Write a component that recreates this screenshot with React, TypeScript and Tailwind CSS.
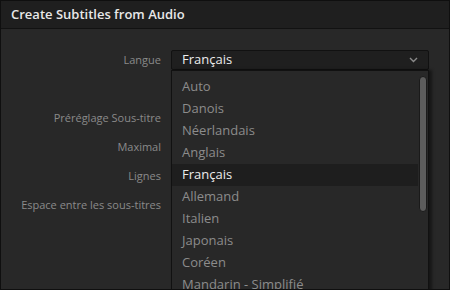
const languages = [
  "Auto",
  "Danois",
  "Néerlandais",
  "Anglais",
  "Français",
  "Allemand",
  "Italien",
  "Japonais",
  "Coréen",
  "Mandarin - Simplifié",
];

const labels = ["Préréglage Sous-titre", "Maximal", "Lignes", "Espace entre les sous-titres"];

export default function App() {
  const selected = "Français";

  return (
    <div className="w-[450px] h-[290px] overflow-hidden border border-[#0f0f0f] bg-[#282828] flex flex-col font-['Open_Sans',sans-serif]">
      <div className="h-[28px] shrink-0 bg-[#1f1f1f] border-b border-[#121212] flex items-center px-[10px]">
        <span className="text-[13px] font-semibold text-[#e8e8e8]">Create Subtitles from Audio</span>
      </div>

      <div className="relative flex-1 pt-[21px]">
        <div className="grid grid-cols-[160px_258px] gap-x-[10px] items-center">
          <span className="text-right text-[11px] text-[#8a8a8a]">Langue</span>
          <div className="h-[20px] bg-[#1f1f1f] border border-[#111] rounded-[2px] flex items-center justify-between pl-[10px] pr-[10px]">
            <span className="text-[13px] text-[#ececec]">{selected}</span>
            <svg width="9" height="6" viewBox="0 0 9 6" fill="none">
              <path d="M1 1l3.5 3.5L8 1" stroke="#8a8a8a" strokeWidth="1.4" />
            </svg>
          </div>
        </div>

        <div className="mt-[34px] grid grid-cols-[160px] auto-rows-[29px] items-center">
          {labels.map((l) => (
            <span key={l} className="text-right text-[11px] text-[#8a8a8a]">{l}</span>
          ))}
        </div>

        <div className="absolute left-[170px] top-[41px] w-[258px] h-[240px] bg-[#282828] border border-[#111] border-b-0 shadow-[3px_0_3px_rgba(0,0,0,0.45)] pt-[5px]">
          {languages.map((lang) => (
            <div
              key={lang}
              className={
                lang === selected
                  ? "h-[22px] mr-[10px] flex items-center pl-[10px] bg-[#1e1e1e] text-[13px] text-[#ececec]"
                  : "h-[22px] mr-[10px] flex items-center pl-[10px] text-[13px] text-[#8c8c8c]"
              }
            >
              {lang}
            </div>
          ))}
          <div className="absolute right-[1px] top-[5px] w-[8px] h-[136px] rounded-full bg-[#5c5c5c] border border-[#1a1a1a]" />
        </div>
      </div>
    </div>
  );
}
